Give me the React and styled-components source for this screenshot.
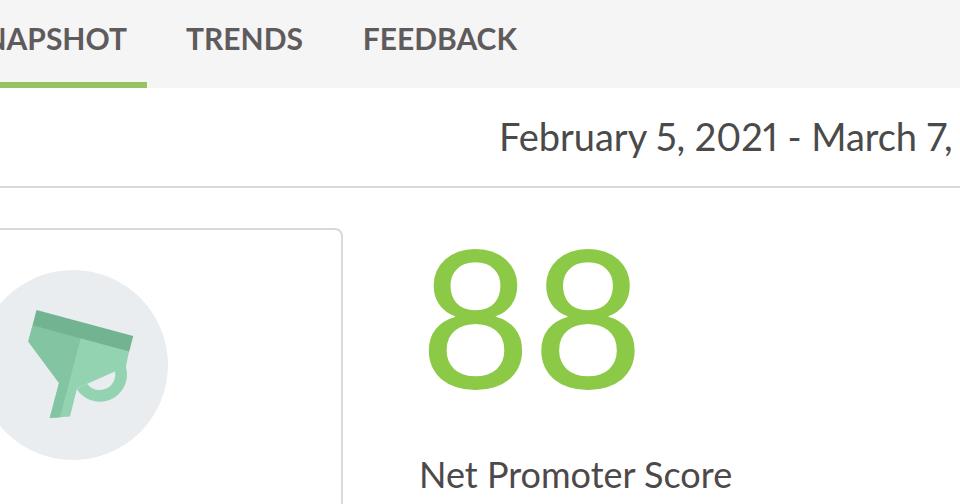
import React from "react";
import styled, { createGlobalStyle } from "styled-components";

const Global = createGlobalStyle`
  * { box-sizing: border-box; }
  body { margin: 0; background: #fff; font-family: Lato, sans-serif; color: #4a4a4a; }
`;
const Page = styled.div`
  width: 960px;
  height: 504px;
  overflow: hidden;
  display: flex;
  flex-direction: column;
`;
const Tabs = styled.nav`
  height: 88px;
  flex: none;
  display: flex;
  background: #f5f5f5;
  margin-left: -40px;
`;
const Tab = styled.a`
  flex: none;
  width: ${(p) => p.$width}px;
  padding: 20px 20px 0 0;
  border-bottom: 6px solid ${(p) => (p.$active ? "#97c262" : "transparent")};
  text-align: right;
  white-space: nowrap;
  font-size: 30px;
  line-height: 36px;
  font-weight: 700;
  color: #5f5b5c;
`;
const DateBar = styled.header`
  height: 100px;
  flex: none;
  border-bottom: 2px solid #d9d9d9;
  padding: 25px 0 0 499px;
  font-size: 38px;
  line-height: 46px;
  letter-spacing: -0.04px;
  white-space: nowrap;
  font-variant-numeric: proportional-nums;
`;
const Content = styled.main`
  flex: 1;
  display: flex;
  padding-top: 40px;
`;
const Card = styled.section`
  flex: none;
  width: 383px;
  height: 320px;
  margin-left: -40px;
  border: 2px solid #d9d9d9;
  border-radius: 8px;
  padding: 40px 0 0 16px;
`;
const Score = styled.section`
  padding-left: 76px;
  display: flex;
  flex-direction: column;
`;
const Value = styled.div`
  height: 224px;
  padding-left: 0.5px;
  font-size: 193px;
  line-height: 171px;
  letter-spacing: 0.5px;
  color: #8cc947;
`;
const Label = styled.div`
  font-size: 36px;
  line-height: 44px;
  white-space: nowrap;
  color: #4d494a;
`;

function Megaphone() {
  return (
    <svg width="190" height="190" viewBox="-22 270 190 190">
      <circle cx="73" cy="365" r="95" fill="#e9edf0" />
      <path d="M125.2 365A27.1 27.1 0 0 1 99.7 401.7A27.1 27.1 0 0 1 76.6 388.8L87.2 383.7A15.6 15.6 0 0 0 99.7 390.1A15.6 15.6 0 0 0 115 371.5Z" fill="#93d3b2" />
      <path d="M32.5 325.5L129.2 351L125.8 366.8L77 388.2L70 416.5L49.7 418L59 383L28.2 341.5Z" fill="#93d3b2" />
      <path d="M32.5 325.5L80.8 338L60 417.2L49.7 418L59 383L28.2 341.5Z" fill="#83c4a2" />
      <path d="M36.5 310L133.2 336L129.2 351.5L32.5 325.5Z" fill="#72b492" />
    </svg>
  );
}

export default function App() {
  return (
    <Page>
      <Global />
      <Tabs>
        <Tab $active $width={187}>SNAPSHOT</Tab>
        <Tab $width={176}>TRENDS</Tab>
        <Tab $width={214}>FEEDBACK</Tab>
      </Tabs>
      <DateBar>February 5, 2021 - March 7,</DateBar>
      <Content>
        <Card><Megaphone /></Card>
        <Score>
          <Value>88</Value>
          <Label>Net Promoter Score</Label>
        </Score>
      </Content>
    </Page>
  );
}
